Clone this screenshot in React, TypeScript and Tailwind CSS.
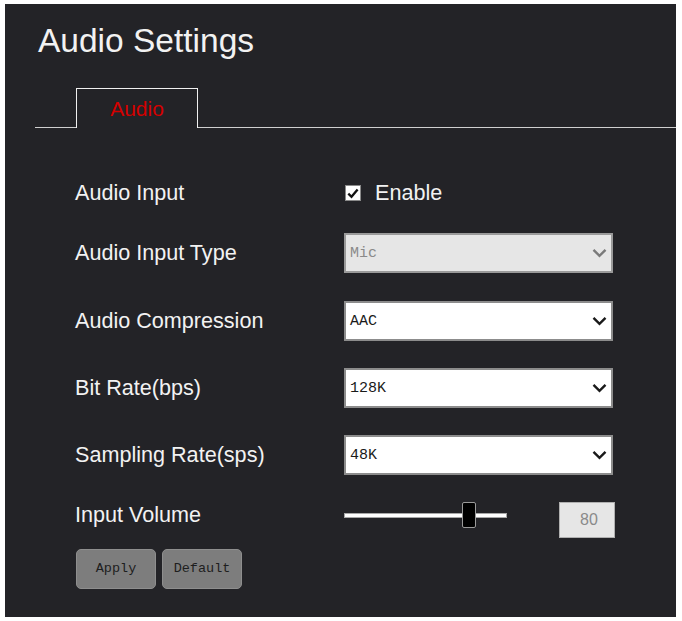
import React from 'react'

const Chevron: React.FC<{ muted?: boolean }> = ({ muted }) => (
  <svg width="15" height="10" viewBox="0 0 15 10" className="shrink-0">
    <path
      d="M1.5 1.8 L7.5 7.8 L13.5 1.8"
      fill="none"
      stroke={muted ? '#7a7a7a' : '#1a1a1a'}
      strokeWidth="2.4"
    />
  </svg>
)

interface SelectProps {
  value: string;
  disabled?: boolean;
}

const FakeSelect: React.FC<SelectProps> = ({ value, disabled }) => (
  <div
    className={
      disabled
        ? 'w-[269px] h-[40px] flex items-center justify-between pl-[4px] pr-[4px] border-2 border-[#9a9a9a] bg-[#e6e6e6] text-[#8a8a8a]'
        : 'w-[269px] h-[40px] flex items-center justify-between pl-[4px] pr-[4px] border-2 border-[#8c8c8c] bg-white text-[#1a1a1a]'
    }
  >
    <span className="font-['Liberation_Mono',monospace] text-[15px] leading-[18px] pt-[1px]">{value}</span>
    <Chevron muted={disabled} />
  </div>
)

const Label: React.FC<{ children: React.ReactNode }> = ({ children }) => (
  <div className="w-[269px] text-[21.6px] leading-[24px]">{children}</div>
)

const App: React.FC = () => {
  const selects = [
    { label: 'Audio Input Type', value: 'Mic', disabled: true, gap: 'mt-[20px]' },
    { label: 'Audio Compression', value: 'AAC', gap: 'mt-[28px]' },
    { label: 'Bit Rate(bps)', value: '128K', gap: 'mt-[27px]' },
    { label: 'Sampling Rate(sps)', value: '48K', gap: 'mt-[27px]' },
  ]

  return (
    <div className="min-h-[621px] w-full bg-white pt-[4px] pl-[5px]">
      <div className="w-[671px] h-[613px] bg-[#232327] text-[#f2f2f2] font-['Liberation_Sans',Arial,sans-serif]">
        <h1 className="pl-[33px] pt-[20px] text-[33.5px] leading-[33px]">Audio Settings</h1>

        {/* tab strip */}
        <div className="mt-[31px] flex items-end pl-[30px]">
          <div className="w-[41px] border-b border-[#cfcfcf]" />
          <div className="w-[122px] h-[40px] border border-b-0 border-[#f0f0f0] flex items-center justify-center text-[21px] text-[#d40000]">
            Audio
          </div>
          <div className="flex-1 border-b border-[#cfcfcf]" />
        </div>

        <div className="pl-[70px]">
          <div className="mt-[45px] h-[40px] flex items-center">
            <Label>Audio Input</Label>
            <div className="flex items-center gap-[14px] pl-[1px]">
              <div className="w-[16px] h-[16px] bg-white border border-[#8a8a8a] flex items-center justify-center">
                <svg width="12" height="11" viewBox="0 0 12 11">
                  <path d="M1.3 5.6 L4.5 8.8 L10.6 1.4" fill="none" stroke="#111" strokeWidth="2.3" />
                </svg>
              </div>
              <span className="text-[21.6px] leading-[24px]">Enable</span>
            </div>
          </div>

          {selects.map((s) => (
            <div key={s.label} className={`${s.gap} h-[40px] flex items-center`}>
              <Label>{s.label}</Label>
              <FakeSelect value={s.value} disabled={s.disabled} />
            </div>
          ))}

          <div className="mt-[20px] flex items-start">
            <div className="mt-[8px]">
              <Label>Input Volume</Label>
            </div>
            <div className="mt-[7px] relative w-[163px] h-[26px] flex items-center">
              <div className="w-full h-[5px] bg-white border border-[#a8a8a8]" />
              <div className="absolute left-[118px] top-0 w-[14px] h-[26px] bg-black border border-[#9a9a9a] rounded-[2px]" />
            </div>
            <div className="mt-[7px] ml-[52px] w-[56px] h-[36px] bg-[#e6e6e6] border border-[#b0b0b0] flex items-center justify-center pl-[4px] text-[16px] text-[#8a8a8a]">
              80
            </div>
          </div>

          <div className="mt-[11px] ml-[1px] flex gap-[6px]">
            {['Apply', 'Default'].map((b) => (
              <button
                key={b}
                className="w-[80px] h-[40px] rounded-[5px] bg-[#7d7d7d] border border-[#8e8e8e] text-[#1e1e1e] font-['Liberation_Mono',monospace] text-[13.5px]"
              >
                {b}
              </button>
            ))}
          </div>
        </div>
      </div>
    </div>
  )
}

export default App
